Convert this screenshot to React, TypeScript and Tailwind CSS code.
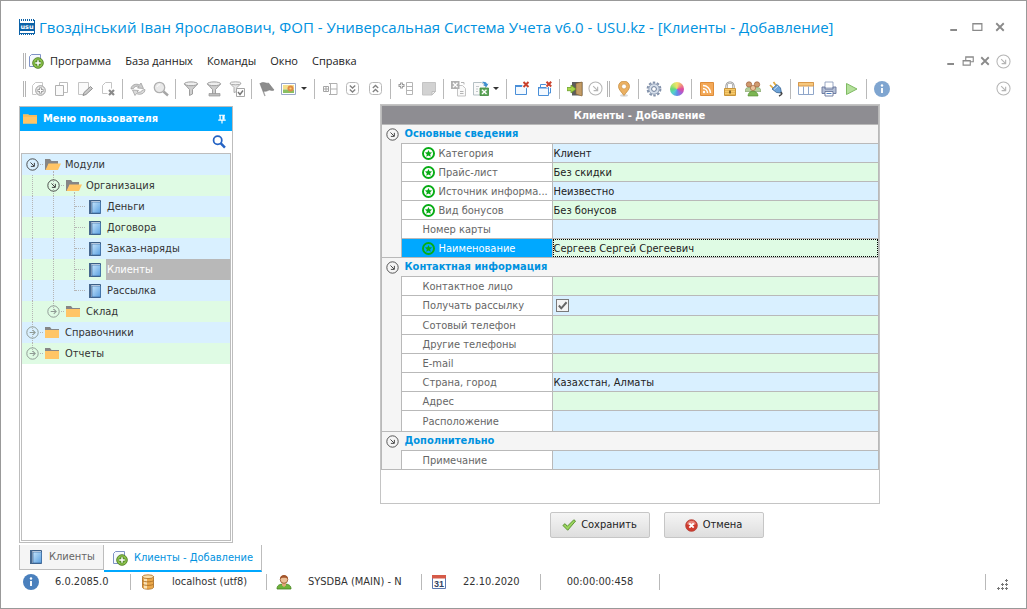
import React, { useState } from 'react';
import clsx from 'clsx';

type IconProps = { className?: string };

/* ---------- shared icon frame ---------- */

function Svg({ children, className }: IconProps & { children: React.ReactNode }) {
  return (
    <svg viewBox="0 0 16 16" fill="none" aria-hidden="true" className={clsx('shrink-0', className ?? 'size-4')}>
      {children}
    </svg>
  );
}

/* ---------- toolbar icons ---------- */

const AddGray = () => (
  <Svg>
    <path d="M1.500 13.500v-9l3-3h7v4M1.500 13.500h4" stroke="#c8c8c8" />
    <circle cx="9.500" cy="9.500" r="4.800" fill="#e9e9e9" stroke="#9c9c9c" />
    <path d="M9.500 6.500v6M6.500 9.500h6" stroke="#8f8f8f" strokeWidth="2.600" />
    <path d="M9.500 7.200v4.600M7.200 9.500h4.600" stroke="#fff" strokeWidth="1.200" />
  </Svg>
);

const CopyGray = () => (
  <Svg>
    <path d="M5.500 1.500h8v10h-8z" fill="#fff" stroke="#bdbdbd" />
    <path d="M1.500 4.500h8v10h-8z" fill="#fafafa" stroke="#b0b0b0" />
  </Svg>
);

const EditGray = () => (
  <Svg>
    <path d="M1.500 1.500h10v8l-4 4h-6z" fill="#fafafa" stroke="#c4c4c4" />
    <path d="M6 14.500l1-3 6.500-6 2 2-6.500 6z" fill="#c9c9c9" stroke="#8f8f8f" />
  </Svg>
);

const DeleteGray = () => (
  <Svg>
    <path d="M2.500 12.500v-8l3-3h6v6M2.500 12.500h5" stroke="#c4c4c4" />
    <path d="M9 9l5 5M14 9l-5 5" stroke="#8a8a8a" strokeWidth="2.200" />
  </Svg>
);

const RefreshGray = () => (
  <Svg>
    <path d="M1 8c0-4 5-6 8.500-4l1.500-2 2.500 5.500-6-.5 1.500-1.500C6.500 4.500 4 6 3.500 7.500z" fill="#cdcdcd" stroke="#989898" strokeWidth=".7" />
    <path d="M15 8.500c0 4-5 6-8.500 4L5 14.500 2.500 9l6 .5L7 11c2.500 1 5-.5 5.500-2z" fill="#dadada" stroke="#989898" strokeWidth=".7" />
  </Svg>
);

const SearchGray = () => (
  <Svg>
    <circle cx="6.500" cy="6.500" r="5.200" fill="#e9e9e9" stroke="#b0b0b0" strokeWidth="1.300" />
    <path d="M10.500 10.500l4.500 4" stroke="#a6a6a6" strokeWidth="2.400" />
    <path d="M4 6c.3-1.500 1.500-2.300 3-2.300" stroke="#fff" />
  </Svg>
);

const FunnelShape = () => (
  <>
    <path d="M1.500 3l5 5.500v6l3-1.500V8.500L14.500 3z" fill="#cfcfcf" stroke="#959595" strokeWidth=".9" />
    <ellipse cx="8" cy="2.800" rx="6.600" ry="1.900" fill="#eee" stroke="#959595" strokeWidth=".9" />
  </>
);

const FilterGray = () => <Svg><FunnelShape /></Svg>;

const FilterEditGray = () => (
  <Svg>
    <FunnelShape />
    <path d="M3 12.500h11v2.500H3z" fill="#bcbcbc" stroke="#959595" strokeWidth=".7" />
  </Svg>
);

const FilterCheckGray = () => (
  <Svg>
    <path d="M1 2.500l4 4v5l3-1v-4l4-4z" fill="#e8e8e8" stroke="#a5a5a5" strokeWidth=".9" />
    <ellipse cx="6.500" cy="2.300" rx="5.500" ry="1.500" fill="#f3f3f3" stroke="#a5a5a5" strokeWidth=".9" />
    <path d="M7.500 7.500h8v8h-8z" fill="#fff" stroke="#a5a5a5" />
    <path d="M9 11l2 2.500 3-4" stroke="#777" strokeWidth="1.400" />
  </Svg>
);

const FlagGray = () => (
  <Svg>
    <path d="M1 2l5 13" stroke="#a5a5a5" strokeWidth="1.300" />
    <path d="M1.500 2.500c2.500-2.500 5 .5 8-.5l5.500 7c-2.500 1.500-4-1-6 .5-1.500 1-3 .5-4.500 1z" fill="#8c8c8c" stroke="#7b7b7b" strokeWidth=".6" />
  </Svg>
);

const PictureIcon = () => (
  <Svg>
    <path d="M.5 2.500h14v11H.5z" fill="#fff" stroke="#9aa9c9" />
    <path d="M2 4h11v4.500H2z" fill="#f3df8d" />
    <path d="M2 8.500h11V12H2z" fill="#8bbf62" />
    <circle cx="9.500" cy="7.500" r="3" fill="#e08a47" />
    <circle cx="9.500" cy="7.500" r="1.100" fill="#f7d774" />
  </Svg>
);

const ColumnsIcon = () => (
  <Svg>
    <path d="M8.500 2v12M9 2.500h6v11H9M9 8h6" stroke="#b0b0b0" />
    <path d="M1.500 5.500h5v5h-5zM4 6v4M2 8h4M7 2.500h1M7 13.500h1" stroke="#a5a5a5" />
  </Svg>
);

const ChevronsDown = () => (
  <Svg>
    <rect x="1.500" y="1.500" width="12" height="12" rx="3" stroke="#b8b8b8" />
    <path d="M4.800 4.500l2.700 2.500 2.700-2.500M4.800 8.500l2.700 2.500 2.700-2.500" stroke="#808080" strokeWidth="1.300" />
  </Svg>
);

const ChevronsUp = () => (
  <Svg>
    <rect x="1.500" y="1.500" width="12" height="12" rx="3" stroke="#b8b8b8" />
    <path d="M4.800 7l2.700-2.500L10.200 7M4.800 11l2.700-2.500 2.700 2.500" stroke="#808080" strokeWidth="1.300" />
  </Svg>
);

const AddRowIcon = () => (
  <Svg>
    <path d="M8.500 1.500h6v12h-6zM8.500 5.500h6M8.500 9.500h6" stroke="#b5b5b5" />
    <path d="M3.500 1.500v6M.5 4.500h6" stroke="#999" strokeWidth="2.800" />
    <path d="M3.500 2.500v4M1.500 4.500h4" stroke="#f0f0f0" />
  </Svg>
);

const NoteIcon = () => (
  <Svg>
    <path d="M1.500 1.500h13v9l-3.500 3.500H1.500z" fill="#d2d2d2" stroke="#c4c4c4" />
    <path d="M14.500 10.500H11V14z" fill="#f2f2f2" stroke="#bdbdbd" />
  </Svg>
);

const ExportGray = () => (
  <Svg>
    <path d="M6.500 4.500h5l3 3v7.500h-8z" fill="#fafafa" stroke="#c4c4c4" />
    <path d="M0 0h8.500v8H0z" fill="#b0b0b0" />
    <path d="M2 1.800l4.500 4.400M6.500 1.800L2 6.200" stroke="#fff" strokeWidth="1.300" />
    <path d="M10 1.500h3v2M9 10.500h3.500M9 12.500h3.500" stroke="#b5b5b5" />
  </Svg>
);

const ExportExcel = () => (
  <Svg>
    <path d="M.5 1.500h8l4 3v9.500H.5z" fill="#fafafa" stroke="#b5c0c4" />
    <path d="M3 5.500h3M3 8h2M3 10.500h2" stroke="#c4c9cc" />
    <path d="M9 1c3-.5 4.500.5 5 2l1.500-.5-2 3.500L10 4l1.500-.3C11 2.500 10.500 2 9 1z" fill="#3f8fd0" />
    <path d="M7 7h8.500v7.500H7z" fill="#5fa65a" stroke="#3f8a3c" strokeWidth=".8" />
    <path d="M9 8.700l4.500 4.200M13.500 8.700L9 12.900" stroke="#fff" strokeWidth="1.400" />
  </Svg>
);

const CloseWindow = () => (
  <Svg>
    <path d="M1.500 4.500h11v9h-11z" fill="#f3f9ff" stroke="#4a8fd8" />
    <path d="M1 4h10v2H1z" fill="#4a8fd8" />
    <path d="M9 .5l5.500 6M14.500.5L9 6.500" stroke="#fff" strokeWidth="3.500" />
    <path d="M9.500 1l5 5M14.500 1l-5 5" stroke="#c9402c" strokeWidth="2" />
  </Svg>
);

const CloseAllWindows = () => (
  <Svg>
    <path d="M3.500 6V3.500h10V12h-2" stroke="#4a8fd8" />
    <path d="M1.500 6.500h10v8h-10z" fill="#f3f9ff" stroke="#4a8fd8" />
    <path d="M1 6h11v1.500H1z" fill="#4a8fd8" />
    <path d="M9 .5l5.500 5.500M14.500.5L9 6" stroke="#fff" strokeWidth="3.500" />
    <path d="M9.500.8l4.700 4.700M14.200.8L9.500 5.500" stroke="#c9402c" strokeWidth="2" />
  </Svg>
);

const DoorIcon = () => (
  <Svg>
    <path d="M5 1h10.500v13.500H5z" fill="#5c5c5c" />
    <path d="M9 2.500L15 1v14L9 13z" fill="#c49c66" stroke="#8b6431" strokeWidth=".6" />
    <path d="M0 6.500h4V4l5 4-5 4V9.700H0z" fill="#a7d64a" stroke="#5e931e" strokeWidth=".7" />
  </Svg>
);

const CircleArrow = ({ className }: IconProps) => (
  <Svg className={className ?? 'size-[15px] text-[#b5b5b5]'}>
    <circle cx="8" cy="8" r="7" stroke="currentColor" strokeWidth="1.100" />
    <path d="M5.500 5.500l4.300 4.300M10.300 6v4.300H6" stroke="currentColor" strokeWidth="1.200" />
  </Svg>
);

const PinMap = () => (
  <Svg>
    <ellipse cx="8" cy="14.500" rx="4" ry="1.200" fill="#d9d9d9" />
    <path d="M8 14.500C5.500 11 2.500 8.500 2.500 5.500a5.500 5.500 0 0111 0c0 3-3 5.500-5.500 9z" fill="#ebb062" stroke="#c08638" strokeWidth=".7" />
    <circle cx="8" cy="5.500" r="2.400" fill="#fff" stroke="#c08638" strokeWidth=".5" />
  </Svg>
);

const GearIcon = () => (
  <Svg>
    <circle cx="8" cy="8" r="6.400" stroke="#8392ab" strokeWidth="2" strokeDasharray="2.500 1.520" />
    <circle cx="8" cy="8" r="5.200" fill="#d6dfeb" stroke="#8392ab" strokeWidth=".8" />
    <circle cx="8" cy="8" r="2.400" fill="#fff" stroke="#6d7d98" />
  </Svg>
);

const ColorWheel = () => (
  <span className="size-[14px] rounded-full bg-[conic-gradient(#f3e36b,#f09a7c,#e14b9c,#a45fd6,#5e8fe6,#54cfd0,#62d87c,#bfe56b,#f3e36b)]" />
);

const RssIcon = () => (
  <Svg>
    <path d="M1.500 1.500h13v13h-13z" fill="#f3a857" stroke="#de8c38" />
    <circle cx="5" cy="11" r="1.200" fill="#fff" />
    <path d="M4 7.500a4.500 4.500 0 014.500 4.500M4 4.500a7.500 7.500 0 017.500 7.500" stroke="#fff" strokeWidth="1.400" />
  </Svg>
);

const LockIcon = () => (
  <Svg>
    <path d="M4.500 8V5a3.500 3.500 0 017 0v3" stroke="#8c8c8c" strokeWidth="2.200" />
    <path d="M4.500 8V5a3.500 3.500 0 017 0v3" stroke="#e6e6e6" strokeWidth=".9" />
    <path d="M2.500 7.500h11v7h-11z" fill="#f6cb6c" stroke="#c9953a" />
    <path d="M3 9.500h10M3 11.500h10M3 13.500h10" stroke="#e0ab4b" strokeWidth=".7" />
    <path d="M8 9.500v3" stroke="#6b5020" strokeWidth="1.600" />
  </Svg>
);

const PeopleIcon = () => (
  <Svg>
    <circle cx="4" cy="3.500" r="2.700" fill="#cf9a6e" stroke="#9d5b36" strokeWidth=".7" />
    <circle cx="12" cy="3.500" r="2.700" fill="#cf9a6e" stroke="#9d5b36" strokeWidth=".7" />
    <path d="M0 10.500c0-3 1.500-4 4-4s3.500 1 4 2c.5-1 1.500-2 4-2s4 1 4 4z" fill="#b4cf9a" stroke="#799b5e" strokeWidth=".6" />
    <circle cx="8" cy="7" r="2.600" fill="#ecc39c" stroke="#a5653b" strokeWidth=".7" />
    <path d="M3 15c0-3 2-4.800 5-4.800s5 1.800 5 4.800z" fill="#7cb552" stroke="#4f8a2c" strokeWidth=".6" />
  </Svg>
);

const PlugIcon = () => (
  <Svg>
    <path d="M2 4l3 3M5.500 1l2.500 3.500" stroke="#e0a93e" strokeWidth="1.700" />
    <path d="M4 8l5-4.500 3.500 3.500 1 5-5-.5z" fill="#6ea3d8" stroke="#33618f" strokeWidth=".8" />
    <path d="M6 8.500l4-3.500" stroke="#cbe2f6" />
    <path d="M12.500 11.500c2 .5 2 2-1.500 3.500" stroke="#444" strokeWidth="1.500" />
  </Svg>
);

const TableIcon = () => (
  <Svg>
    <path d="M.5 1.500h15v12H.5z" fill="#fff" stroke="#8fa6c9" />
    <path d="M.5 1.500h15v3.500H.5z" fill="#f5c77e" stroke="#d9994a" />
    <path d="M5.500 5.500v8M10.500 5.500v8" stroke="#8fa6c9" />
  </Svg>
);

const PrinterIcon = () => (
  <Svg>
    <path d="M4 1h8v6H4z" fill="#fff" stroke="#8292b5" strokeWidth=".8" />
    <path d="M1 6h3v2h8V6h3v6.500H1z" fill="#b5c0d6" stroke="#66759b" strokeWidth=".9" />
    <path d="M4 10.500h8v4.500H4z" fill="#fff" stroke="#66759b" strokeWidth=".9" />
    <path d="M5.500 12.500h5" stroke="#4d7fc2" />
  </Svg>
);

const PlayIcon = () => (
  <Svg>
    <path d="M2.500 2.500L13 8 2.500 13.500z" fill="#b4e09b" stroke="#7fba63" />
  </Svg>
);

const InfoIcon = ({ className }: IconProps) => (
  <Svg className={className}>
    <circle cx="8" cy="8" r="8" fill="currentColor" />
    <circle cx="8" cy="4.500" r="1.200" fill="#fff" />
    <path d="M8 7v5" stroke="#fff" strokeWidth="1.900" />
  </Svg>
);

/* ---------- other icons ---------- */

const AddDocument = ({ className }: IconProps) => (
  <Svg className={className}>
    <path d="M1.500 13.500V3.500l2-2h9v12z" fill="#f6f9fe" stroke="#7f93c6" />
    <circle cx="10" cy="10" r="5.300" fill="#8cc24c" stroke="#4d7d22" strokeWidth=".9" />
    <path d="M10 6.800v6.400M6.800 10h6.400" stroke="#447a1c" strokeWidth="3" />
    <path d="M10 7.200v5.600M7.200 10h5.600" stroke="#fff" strokeWidth="1.500" />
  </Svg>
);

const Folder = () => (
  <Svg>
    <path d="M0 2h5l1.500 2H14v2H0z" fill="#868686" />
    <path d="M0 5h14v8H0z" fill="#ffc566" />
  </Svg>
);

const FolderOpen = () => (
  <Svg>
    <path d="M0 2h5l1.500 2H13v3H4l-3 6H0z" fill="#868686" />
    <path d="M3.500 6.500H16L13 13H.5z" fill="#ffc566" />
  </Svg>
);

const Book = () => (
  <Svg>
    <defs>
      <linearGradient id="book" x1="0" y1="0" x2="1" y2="1">
        <stop offset="0" stopColor="#c4e4fb" />
        <stop offset="1" stopColor="#5a9fe0" />
      </linearGradient>
    </defs>
    <path d="M2.500 1.500h11v13h-11z" fill="#f4f8fc" stroke="#3c5f86" />
    <path d="M5 3h8.500v11H5z" fill="url(#book)" stroke="#3f6fa5" strokeWidth=".7" />
    <path d="M2 1h2.500v14H2z" fill="#46688f" />
  </Svg>
);

const StarBadge = () => (
  <Svg className="size-[13px]">
    <circle cx="8" cy="8" r="6.800" stroke="#07ac15" strokeWidth="2.400" />
    <path d="M8 3.600l1.300 2.900 3.100.3-2.300 2.100.7 3.100L8 10.400 5.200 12l.7-3.100-2.300-2.100 3.100-.3z" fill="#07ac15" />
  </Svg>
);

const CheckGreen = () => (
  <Svg className="size-[14px]">
    <path d="M1 8.500l2.500-2 2.500 3L13.500 2l2 1.500L6.500 14z" fill="#9bd45e" stroke="#4f8a26" strokeWidth="1" />
  </Svg>
);

const CancelRed = () => (
  <Svg className="size-[13px]">
    <circle cx="8" cy="8" r="7.200" fill="#cf3b2e" stroke="#b5443a" />
    <path d="M2.500 6a5.800 5.800 0 0111 0c-3 2-8 2-11 0z" fill="#e8897e" />
    <path d="M5.300 5.300l5.400 5.400M10.700 5.300l-5.400 5.400" stroke="#fff" strokeWidth="2.300" />
  </Svg>
);

const Database = () => (
  <Svg>
    <path d="M2.500 2.500v11c1 2.300 10 2.300 11 0v-11z" fill="#eba94c" stroke="#a96c22" strokeWidth=".8" />
    <path d="M4 3v11.500h3V3z" fill="#fbe2b4" />
    <ellipse cx="8" cy="2.700" rx="5.500" ry="1.900" fill="#fbe0ac" stroke="#a96c22" strokeWidth=".8" />
    <path d="M2.500 6.500c1 1.800 10 1.800 11 0M2.500 10c1 1.800 10 1.800 11 0" stroke="#a96c22" strokeWidth=".9" />
  </Svg>
);

const UserIcon = () => (
  <Svg>
    <path d="M1 15c0-3.500 2-5 7-5s7 1.500 7 5z" fill="#6db33a" stroke="#44801e" strokeWidth=".8" />
    <path d="M6 9h4v2.500l-2 1.500-2-1.500z" fill="#e0a878" />
    <circle cx="8" cy="5.500" r="3.800" fill="#ecc098" stroke="#8f5127" strokeWidth=".8" />
    <path d="M4 5c0-5.500 8-5.500 8 0-1.500-1.500-6-2-8 0z" fill="#a4562c" />
  </Svg>
);

const Calendar = () => (
  <Svg>
    <path d="M1.500 1.500h13v13h-13z" fill="#fff" stroke="#5c78b0" />
    <path d="M1 1h14v3.500H1z" fill="#d65a48" />
    <text x="8" y="12.800" textAnchor="middle" fontSize="9" fontWeight="700" fontFamily="Liberation Sans, sans-serif" fill="#34435f">31</text>
  </Svg>
);

const Logo = () => (
  <Svg className="size-4">
    <path d="M.5 0v2M2.500 0v2M4.500 0v2M6.500 0v2M8.500 0v2M10.500 0v2M12.500 0v2M14.500 0v2M.5 14v2M2.500 14v2M4.500 14v2M6.500 14v2M8.500 14v2M10.500 14v2M12.500 14v2M14.500 14v2" stroke="#0b62a8" />
    <path d="M.5 1v14M15.500 1v14M0 14.500h16" stroke="#0b62a8" />
    <path d="M0 4h16v8H0z" fill="#0b62a8" />
    <text x="8" y="10.200" textAnchor="middle" fontSize="6.500" fontWeight="700" fontFamily="DejaVu Sans, sans-serif" fill="#fff">usu</text>
  </Svg>
);

const MinimizeGlyph = () => <Svg className="size-3"><path d="M3 12h9" stroke="#8a8a8a" strokeWidth="2.600" /></Svg>;
const MaximizeGlyph = () => <Svg className="size-3"><path d="M2.500 3.500h12v9h-12zM2 4h13" stroke="#8a8a8a" strokeWidth="1.600" /></Svg>;
const CloseGlyph = () => <Svg className="size-3"><path d="M3 3l10 10M13 3L3 13" stroke="#8a8a8a" strokeWidth="2.400" /></Svg>;
const RestoreGlyph = () => (
  <Svg className="size-3">
    <path d="M5 7V2.500h10V9h-4M5 3h10M1.500 7.500h9.500v6H1.500zM1 8h10" stroke="#8a8a8a" strokeWidth="1.500" />
  </Svg>
);

/* ---------- toolbar ---------- */

type Tool = { label: string; icon: React.ReactNode; menu?: boolean; narrow?: boolean };

const toolGroups: Tool[][] = [
  [
    { label: 'Добавить', icon: <AddGray /> },
    { label: 'Копировать', icon: <CopyGray /> },
    { label: 'Редактировать', icon: <EditGray /> },
    { label: 'Удалить', icon: <DeleteGray /> },
  ],
  [
    { label: 'Обновить', icon: <RefreshGray /> },
    { label: 'Поиск', icon: <SearchGray /> },
  ],
  [
    { label: 'Фильтр', icon: <FilterGray /> },
    { label: 'Изменить фильтр', icon: <FilterEditGray /> },
    { label: 'Применить фильтр', icon: <FilterCheckGray /> },
  ],
  [
    { label: 'Отметка', icon: <FlagGray /> },
    { label: 'Изображение', icon: <PictureIcon />, menu: true },
  ],
  [
    { label: 'Столбцы', icon: <ColumnsIcon /> },
    { label: 'Развернуть все', icon: <ChevronsDown /> },
    { label: 'Свернуть все', icon: <ChevronsUp /> },
  ],
  [
    { label: 'Добавить строку', icon: <AddRowIcon /> },
    { label: 'Примечание', icon: <NoteIcon /> },
  ],
  [
    { label: 'Импорт', icon: <ExportGray /> },
    { label: 'Экспорт', icon: <ExportExcel />, menu: true },
  ],
  [
    { label: 'Закрыть окно', icon: <CloseWindow /> },
    { label: 'Закрыть все окна', icon: <CloseAllWindows /> },
  ],
  [
    { label: 'Выход', icon: <DoorIcon /> },
    { label: 'Настройка панели', icon: <CircleArrow />, narrow: true },
  ],
];

const extraGroups: Tool[][] = [
  [{ label: 'Карта', icon: <PinMap /> }],
  [
    { label: 'Настройки', icon: <GearIcon /> },
    { label: 'Цвет', icon: <ColorWheel /> },
  ],
  [
    { label: 'Новости', icon: <RssIcon /> },
    { label: 'Блокировка', icon: <LockIcon /> },
    { label: 'Пользователи', icon: <PeopleIcon /> },
    { label: 'Подключение', icon: <PlugIcon /> },
  ],
  [
    { label: 'Таблица', icon: <TableIcon /> },
    { label: 'Печать', icon: <PrinterIcon /> },
    { label: 'Запуск', icon: <PlayIcon /> },
  ],
  [{ label: 'О программе', icon: <InfoIcon className="size-4 text-[#7fa5d0]" /> }],
];

const Grip = () => <div className="h-4 w-[3px] shrink-0 border-x border-[#b4b4b4]" />;

function ToolGroups({ groups }: { groups: Tool[][] }) {
  return (
    <>
      {groups.map((group, i) => (
        <div key={i} className="flex items-center">
          {i > 0 && <div className="mx-[3px] h-5 w-px bg-[#b9b9b9]" />}
          {group.map((tool) => (
            <button
              key={tool.label}
              aria-label={tool.label}
              className={clsx(
                'flex h-6 items-center',
                tool.menu ? 'w-[33px] gap-[4px] pl-[3px]' : 'justify-center',
                !tool.menu && (tool.narrow ? 'w-[18px]' : 'w-[23px]')
              )}
            >
              {tool.icon}
              {tool.menu && <span className="border-x-[3px] border-t-[3px] border-x-transparent border-t-[#333]" />}
            </button>
          ))}
        </div>
      ))}
    </>
  );
}

/* ---------- tree ---------- */

type Node = {
  label: string;
  level: number;
  kind: 'open' | 'closed' | 'leaf';
  // last child of its parent: the guide stops at the middle of the row
  last?: boolean;
};

const nodes: Node[] = [
  { label: 'Модули', level: 0, kind: 'open' },
  { label: 'Организация', level: 1, kind: 'open' },
  { label: 'Деньги', level: 2, kind: 'leaf' },
  { label: 'Договора', level: 2, kind: 'leaf' },
  { label: 'Заказ-наряды', level: 2, kind: 'leaf' },
  { label: 'Клиенты', level: 2, kind: 'leaf' },
  { label: 'Рассылка', level: 2, kind: 'leaf', last: true },
  { label: 'Склад', level: 1, kind: 'closed', last: true },
  { label: 'Справочники', level: 0, kind: 'closed' },
  { label: 'Отчеты', level: 0, kind: 'closed', last: true },
];

function TreeRow({ node, index, selected, onSelect }: {
  node: Node;
  index: number;
  selected: boolean;
  onSelect: () => void;
}) {
  return (
    <li className={clsx('flex h-[21px]', index % 2 === 0 ? 'bg-[#d9f0ff]' : 'bg-[#dffbe4]')}>
      {Array.from({ length: node.level }, (_, i) => (
        <span key={i} className="w-[21px] shrink-0">
          <span className="block h-full w-[11px] border-r border-dotted border-[#b5b5b5]" />
        </span>
      ))}
      <span className="relative flex w-[21px] shrink-0 items-center justify-center">
        {index > 0 && (
          <span
            className={clsx(
              'absolute left-0 top-0 w-[11px] border-r border-dotted border-[#b5b5b5]',
              node.last ? 'h-[11px]' : 'h-full'
            )}
          />
        )}
        <span
          className={clsx(
            'absolute right-0 top-[10px] border-t border-dotted border-[#b5b5b5]',
            node.kind === 'leaf' ? 'left-[11px]' : 'left-[18px]'
          )}
        />
        {node.kind !== 'leaf' && (
          <button aria-label={node.kind === 'open' ? 'Свернуть' : 'Развернуть'} className="relative">
            {node.kind === 'open' ? (
              <CircleArrow className="block size-[13px] text-[#3c3c3c]" />
            ) : (
              <Svg className="block size-[13px]">
                <circle cx="8" cy="8" r="7" stroke="#8f9a94" strokeWidth="1.200" />
                <path d="M4.500 8h6.500M8.300 5l3 3-3 3" stroke="#8f9a94" strokeWidth="1.300" />
              </Svg>
            )}
          </button>
        )}
      </span>
      <span className="relative flex w-[21px] shrink-0 items-center pl-[2px]">
        {node.kind === 'open' && (
          <span className="absolute bottom-0 left-0 h-1 w-[11px] border-r border-dotted border-[#b5b5b5]" />
        )}
        {node.kind === 'open' ? <FolderOpen /> : node.kind === 'closed' ? <Folder /> : <Book />}
      </span>
      <button
        onClick={onSelect}
        className={clsx('flex-1 pl-px text-left', selected ? 'bg-[#b8b8b8] text-white' : 'text-[#333]')}
      >
        {node.label}
      </button>
    </li>
  );
}

/* ---------- property grid ---------- */

type Field = {
  label: string;
  value?: string;
  required?: boolean;
  checkbox?: boolean;
  active?: boolean;
  height?: string;
};

const sections: { title: string; fields: Field[] }[] = [
  {
    title: 'Основные сведения',
    fields: [
      { label: 'Категория', value: 'Клиент', required: true },
      { label: 'Прайс-лист', value: 'Без скидки', required: true },
      { label: 'Источник информа...', value: 'Неизвестно', required: true },
      { label: 'Вид бонусов', value: 'Без бонусов', required: true },
      { label: 'Номер карты' },
      { label: 'Наименование', value: 'Сергеев Сергей Срегеевич', required: true, active: true },
    ],
  },
  {
    title: 'Контактная информация',
    fields: [
      { label: 'Контактное лицо' },
      { label: 'Получать рассылку', checkbox: true, height: 'h-[20px]' },
      { label: 'Сотовый телефон' },
      { label: 'Другие телефоны' },
      { label: 'E-mail' },
      { label: 'Страна, город', value: 'Казахстан, Алматы' },
      { label: 'Адрес' },
      { label: 'Расположение', height: 'h-[21px]' },
    ],
  },
  {
    title: 'Дополнительно',
    fields: [{ label: 'Примечание' }],
  },
];

function FieldRow({ field, id, green }: { field: Field; id: string; green: boolean }) {
  return (
    <div className={clsx('flex border-t border-[#b9b9b9]', field.height ?? 'h-[19px]')}>
      <label
        htmlFor={id}
        className={clsx(
          'flex w-[150px] shrink-0 items-center gap-1 whitespace-nowrap pt-px',
          field.required ? 'pl-5' : 'pl-[21px]',
          field.active ? 'bg-[#00a8ff] text-white' : 'bg-white text-[#666]'
        )}
      >
        {field.required && <StarBadge />}
        {field.label}
      </label>
      <div
        className={clsx(
          'flex min-w-0 flex-1 items-center border-l border-[#b9b9b9]',
          green ? 'bg-[#dffbe4]' : 'bg-[#d9f0ff]'
        )}
      >
        {field.checkbox ? (
          <span className="ml-[3px] grid size-[13px]">
            <input
              id={id}
              type="checkbox"
              defaultChecked
              className="peer col-start-1 row-start-1 size-[13px] appearance-none border border-[#7a7a7a] bg-[#f4f4f4]"
            />
            <Svg className="pointer-events-none invisible col-start-1 row-start-1 size-[13px] peer-checked:visible">
              <path d="M3.500 8l3 3.500L13 4" stroke="#666" strokeWidth="2.400" />
            </Svg>
          </span>
        ) : (
          <input
            id={id}
            type="text"
            defaultValue={field.value ?? ''}
            className={clsx(
              'h-full w-full min-w-0 bg-transparent text-[#222] outline-none',
              field.active ? 'border border-dotted border-black' : 'px-px'
            )}
          />
        )}
      </div>
    </div>
  );
}

function PropertyGrid() {
  // stripes run through the whole grid, section captions count as rows too
  let line = 0;
  return (
    <div className="border border-[#c4c4c4] bg-white pb-[33px]">
      <div className="border border-[#b9b9b9]">
        <h2 className="h-[18px] bg-[#8e8d92] pl-5 text-center font-bold leading-[19px] text-white">
          Клиенты - Добавление
        </h2>
        {sections.map((section) => {
          line++;
          return (
            <section key={section.title} className="border-t border-[#b9b9b9] bg-[#f5f5f5]">
              <h3 className="flex h-[18px] items-center gap-[6px] pl-1 font-bold text-[#0092e0]">
                <button aria-label="Свернуть">
                  <CircleArrow className="block size-[13px] text-[#444]" />
                </button>
                {section.title}
              </h3>
              <div className="ml-[19px] border-l border-[#b9b9b9]">
                {section.fields.map((field) => {
                  const index = line++;
                  return <FieldRow key={field.label} field={field} id={`field-${index}`} green={index % 2 === 0} />;
                })}
              </div>
            </section>
          );
        })}
      </div>
    </div>
  );
}

/* ---------- page ---------- */

const menuItems = ['Программа', 'База данных', 'Команды', 'Окно', 'Справка'];

const formButton =
  'flex h-[26px] w-[100px] items-center justify-center gap-[5px] rounded-xs border border-[#c6c6c6] bg-linear-to-b from-[#f5f5f5] to-[#dedede] text-[#222]';

export default function App() {
  const [selected, setSelected] = useState('Клиенты');

  return (
    <div className="flex min-h-screen flex-col border border-[#999] bg-white font-['DejaVu_Sans_Condensed','DejaVu_Sans',sans-serif] text-[11px] leading-4 text-[#333]">
      {/* Title bar */}
      <header className="flex h-12 items-center gap-1 pl-[18px] pr-5 pt-1">
        <Logo />
        <h1 className="flex-1 truncate font-['Open_Sans',sans-serif] text-[15px] leading-6 text-[#0092e0]">
          Гвоздінський Іван Ярославович, ФОП - Универсальная Система Учета v6.0 - USU.kz - [Клиенты - Добавление]
        </h1>
        <div className="flex gap-[11px]">
          <button aria-label="Свернуть"><MinimizeGlyph /></button>
          <button aria-label="Развернуть"><MaximizeGlyph /></button>
          <button aria-label="Закрыть"><CloseGlyph /></button>
        </div>
      </header>

      {/* Menu */}
      <nav className="flex h-6 items-center pl-[22px] pr-[15px] font-['Open_Sans',sans-serif] text-[#222]">
        <Grip />
        <AddDocument className="ml-[2px] mr-[6px] size-4" />
        <div className="flex flex-1 gap-[14px]">
          {menuItems.map((item) => (
            <button key={item}>{item}</button>
          ))}
        </div>
        <div className="flex items-center gap-[5px]">
          <button aria-label="Свернуть документ"><MinimizeGlyph /></button>
          <button aria-label="Восстановить документ"><RestoreGlyph /></button>
          <button aria-label="Закрыть документ"><CloseGlyph /></button>
          <CircleArrow />
        </div>
      </nav>

      {/* Toolbar */}
      <div role="toolbar" className="flex h-[31px] items-center pl-[22px] pr-[15px]">
        <Grip />
        <div className="ml-px flex">
          <ToolGroups groups={toolGroups} />
        </div>
        <div className="ml-[3px] mr-[2px]"><Grip /></div>
        <ToolGroups groups={extraGroups} />
        <button aria-label="Параметры панели" className="ml-auto"><CircleArrow /></button>
      </div>

      <main className="flex flex-1">
        {/* User menu */}
        <aside className="ml-[18px] mt-[2px] flex w-[214px] shrink-0 flex-col border border-[#bdbdbd]">
          <h2 className="flex h-6 items-center gap-[6px] bg-[#00a8ff] pl-[3px] pr-1 font-bold text-white">
            <Svg className="size-[14px]">
              <path d="M0 2.500h6l1 1h9v10H0z" fill="#ffc566" />
              <path d="M0 4.500h16" stroke="#e8a94a" strokeWidth=".8" />
            </Svg>
            <span className="flex-1">Меню пользователя</span>
            <Svg className="size-3">
              <path d="M4 3h8M5.500 3v6M3 9.500h10M8 10v4" stroke="#fff" strokeWidth="1.600" />
              <path d="M8.500 3h3v6h-3z" fill="#fff" />
            </Svg>
          </h2>
          <div className="flex h-[22px] items-center">
            <input aria-label="Поиск по меню" type="text" className="h-full min-w-0 flex-1 px-1 outline-none" />
            <button aria-label="Найти" className="mr-[6px]">
              <Svg className="block size-[14px]">
                <circle cx="6.500" cy="6" r="4.700" stroke="#2563c4" strokeWidth="2" />
                <path d="M9.800 9.300l5 5.200" stroke="#2563c4" strokeWidth="2.800" />
              </Svg>
            </button>
          </div>
          <ul className="mx-px mb-px flex-1 border border-[#bdbdbd]">
            {nodes.map((node, i) => (
              <TreeRow
                key={node.label}
                node={node}
                index={i}
                selected={node.label === selected}
                onSelect={() => setSelected(node.label)}
              />
            ))}
          </ul>
        </aside>

        {/* Client form */}
        <div className="min-w-0 flex-1">
          <form className="mx-auto max-w-[500px]" onSubmit={(e) => e.preventDefault()}>
            <PropertyGrid />
            <div className="mt-2 flex gap-[14px] pl-[170px]">
              <button type="submit" className={formButton}>
                <CheckGreen />
                Сохранить
              </button>
              <button type="button" className={formButton}>
                <CancelRed />
                Отмена
              </button>
            </div>
          </form>
        </div>
      </main>

      {/* Window tabs */}
      <div role="tablist" className="mt-[2px] flex items-start pl-[18px]">
        <button role="tab" className="flex h-[25px] w-[85px] items-center gap-[5px] border-x border-b border-[#bdbdbd] bg-[#f5f5f5] pl-2 text-[#666]">
          <Book />
          Клиенты
        </button>
        <button role="tab" aria-selected="true" className="flex h-[27px] w-[158px] items-center gap-[6px] border-b-2 border-r border-b-[#00a8ff] border-r-[#bdbdbd] pl-2 text-[#0092e0]">
          <AddDocument />
          Клиенты - Добавление
        </button>
      </div>

      {/* Status bar */}
      <footer className="mb-4 flex h-5 items-center pl-[22px] pr-[18px]">
        <div className="flex h-4 w-[108px] items-center gap-4 border-r border-[#b9b9b9]">
          <InfoIcon className="size-4 text-[#4a80bd]" />
          6.0.2085.0
        </div>
        <div className="flex h-4 w-[136px] items-center gap-4 border-r border-[#b9b9b9] pl-[9px]">
          <Database />
          localhost (utf8)
        </div>
        <div className="flex h-4 w-[155px] items-center gap-4 border-r border-[#b9b9b9] pl-[9px]">
          <UserIcon />
          SYSDBA (MAIN) - N
        </div>
        <div className="flex h-4 w-[119px] items-center gap-4 border-r border-[#b9b9b9] pl-[9px]">
          <Calendar />
          22.10.2020
        </div>
        <div className="flex h-4 w-[119px] items-center justify-center border-r border-[#b9b9b9]">
          00:00:00:458
        </div>
        <div className="ml-auto flex h-4 items-end border-l border-[#b9b9b9] pl-[11px]">
          <svg viewBox="0 0 11 11" className="size-[11px]" aria-hidden="true">
            <path d="M8 1.500h3M9.500 0v3M4 5.500h3M5.500 4v3M8 5.500h3M9.500 4v3M0 9.500h3M1.500 8v3M4 9.500h3M5.500 8v3M8 9.500h3M9.500 8v3" stroke="#777" />
          </svg>
        </div>
      </footer>
    </div>
  );
}
